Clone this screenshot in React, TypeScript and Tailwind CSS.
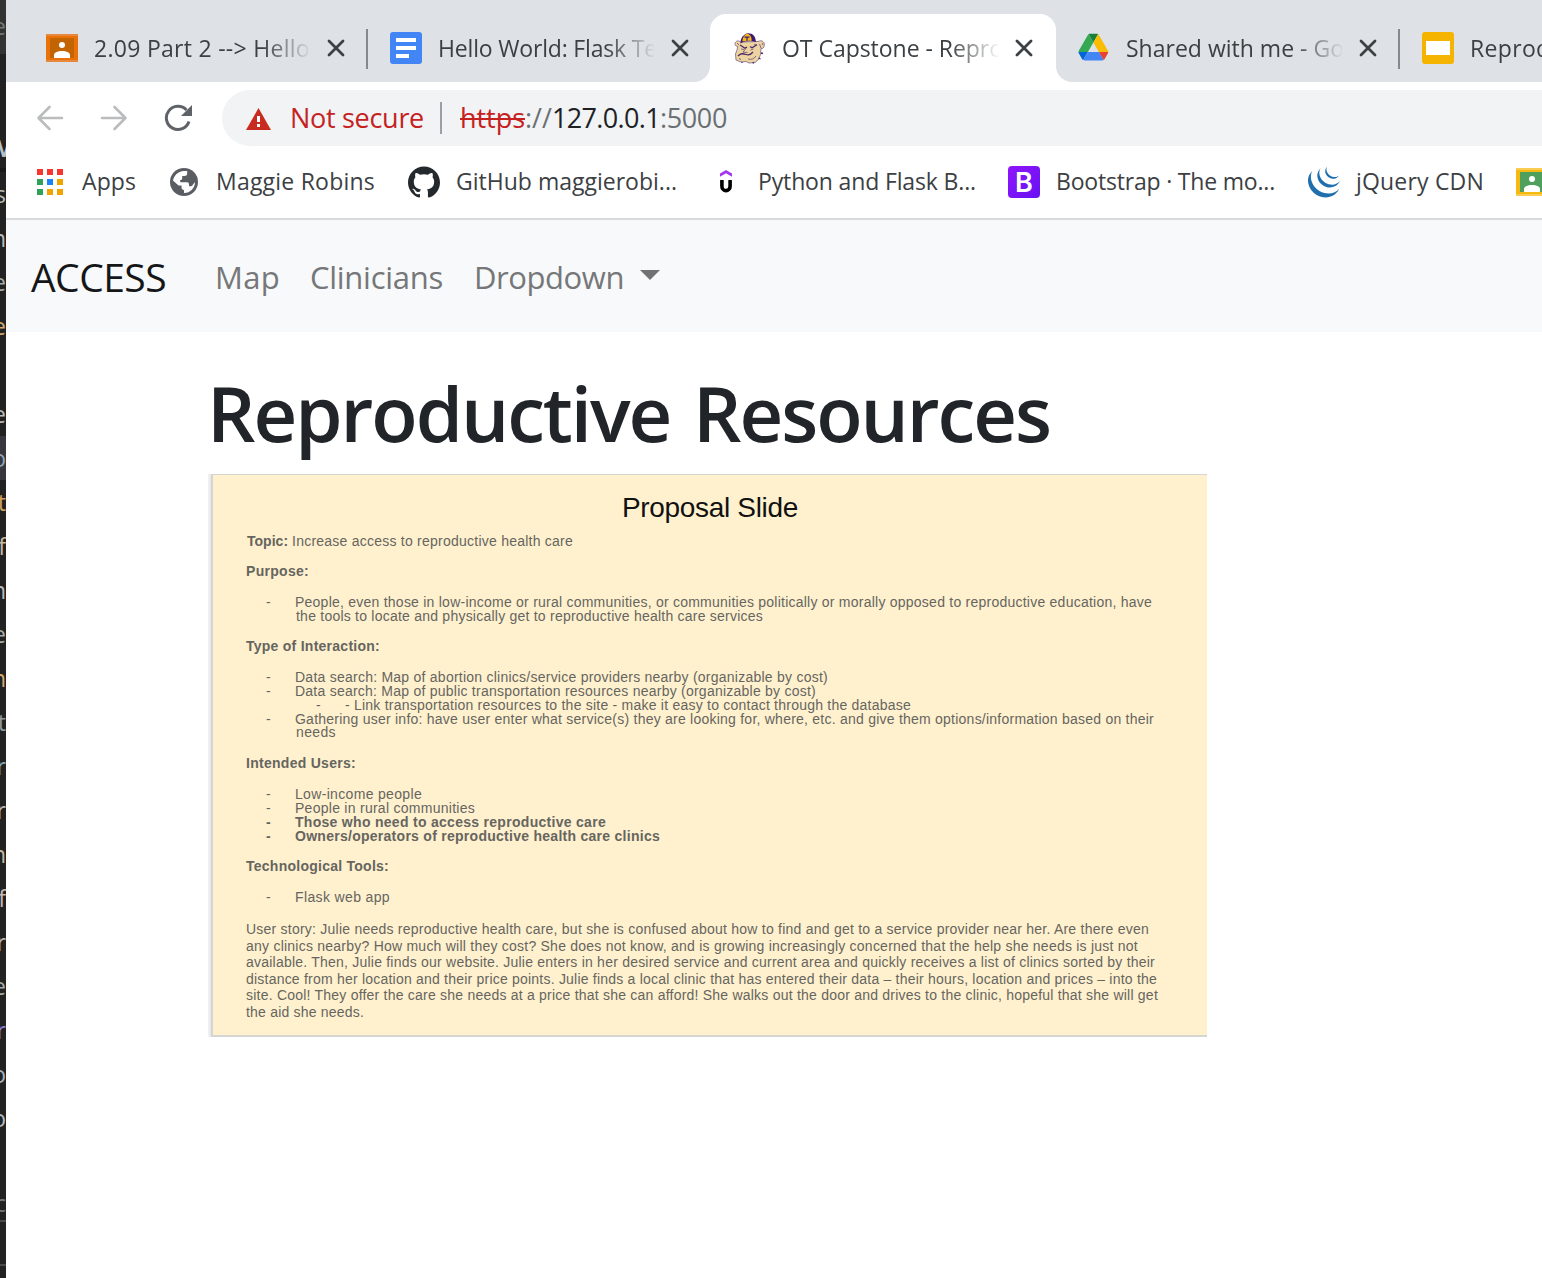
import { useLayoutEffect, useRef, useState } from "react";
import type { ReactNode } from "react";
import { SiGithub, SiJquery } from "react-icons/si";

/* A run of text whose tracking is adjusted so that it takes up exactly `w` pixels. */
function Fit({ w, children, className = "" }: { w: number; children: string; className?: string }) {
  const ref = useRef<HTMLSpanElement>(null);
  const [spacing, setSpacing] = useState(0);
  useLayoutEffect(() => {
    if (!ref.current) return;
    const natural = ref.current.getBoundingClientRect().width;
    setSpacing((w - natural) / children.length);
  }, [w, children]);
  return (
    <span ref={ref} className={`inline-block shrink-0 whitespace-pre ${className}`} style={{ letterSpacing: spacing }}>
      {children}
    </span>
  );
}

function Classroom({ frame, edge, board }: { frame: string; edge: string; board: string }) {
  return (
    <svg width="32" height="28" viewBox="0 0 32 28" className="shrink-0" shapeRendering="crispEdges">
      <rect width="32" height="28" fill={edge} />
      <rect y="2" width="32" height="24" fill={frame} />
      <rect x="4" y="4" width="24" height="20" fill={board} />
      <g fill="#fff" shapeRendering="auto">
        <circle cx="16" cy="11" r="3" />
        <path d="M8 24v-3c0-2.400 3.600-4 8-4s8 1.600 8 4v3z" />
      </g>
    </svg>
  );
}

function Docs() {
  return (
    <svg width="32" height="32" viewBox="0 0 32 32" className="shrink-0">
      <rect width="32" height="32" rx="3" fill="#4285f4" />
      <path d="M6 6h20v4H6zM6 14h20v4H6zM6 22h13v4H6z" fill="#fff" />
    </svg>
  );
}

function Slides() {
  return (
    <svg width="32" height="32" viewBox="0 0 32 32" className="shrink-0">
      <rect width="32" height="32" rx="3" fill="#f5b400" />
      <path d="M4 9h24v14H4z" fill="#fff" />
    </svg>
  );
}

function Drive() {
  return (
    <svg width="32" height="32" viewBox="-1.5 -5.5 94 94" className="shrink-0">
      <path d="m6.6 66.85 3.85 6.65c.8 1.4 1.95 2.5 3.3 3.3l13.75-23.8h-27.5c0 1.55.4 3.1 1.2 4.5z" fill="#0066da" />
      <path d="m43.65 25-13.75-23.8c-1.35.8-2.5 1.9-3.3 3.3l-25.4 44a9.06 9.06 0 0 0 -1.2 4.5h27.5z" fill="#34a853" />
      <path d="m73.55 76.8c1.35-.8 2.5-1.9 3.3-3.3l1.6-2.75 7.65-13.25c.8-1.4 1.2-2.95 1.2-4.5h-27.502l5.852 11.5z" fill="#ea4335" />
      <path d="m43.65 25 13.75-23.8c-1.35-.8-2.9-1.2-4.5-1.2h-18.5c-1.6 0-3.15.45-4.5 1.2z" fill="#188038" />
      <path d="m59.8 53h-32.3l-13.75 23.8c1.35.8 2.9 1.2 4.5 1.2h50.8c1.6 0 3.15-.45 4.5-1.2z" fill="#4285f4" />
      <path d="m73.4 26.5-12.7-22c-.8-1.4-1.95-2.5-3.3-3.3l-13.75 23.8 16.15 28h27.45c0-1.55-.4-3.1-1.2-4.5z" fill="#fbbc04" />
    </svg>
  );
}

function Globe() {
  return (
    <svg width="28" height="28" viewBox="0 0 28 28" className="shrink-0">
      <circle cx="14" cy="14" r="14" fill="#5a5e63" />
      <path d="M3 14C3 8 8 3 14 3h3.200v2.500q0 2.500-3 2.500h-2v2.500q0 1.500-2 1.500v2.200h7q1.800 0 1.800 2v2h1.500q2 0 2.300-1.500L25 14C25 20 20.500 25 14 25v-3q-2.500 0-2.500-3v-1.500H8.500L3 12.500z" fill="#fff" />
    </svg>
  );
}

function Bulldog() {
  return (
    <svg width="32" height="32" viewBox="0 0 32 32" className="shrink-0">
      <path d="M7 10C4 8 1.500 9 1 11.500c0 2 1.200 3 2.800 3L3 18l-1.500 4 .5 6 5 2 5-.5 3 1.500 6-.5 3.500-3 2-5 .5-6c2 .4 3.200-1 3.200-3.500C30.800 10 28 7.500 24 9.500z" fill="#ecd3a0" stroke="#7b5f86" strokeWidth=".8" />
      <path d="M6.500 11.500C6.500 6 9 2.500 13.500 1.200 19 1 21.500 4 22 10c-5-1.500-10.500-1.300-15.500 1.500z" fill="#3d1a73" />
      <path d="M8.500 9.500c0-4 2-7 5-8C17 3 18 6 17.500 9c-3-.5-6-.3-9 .5z" fill="#f4b81c" />
      <path d="M10.500 5.200h5M13 5.200v3.600" stroke="#3d1a73" strokeWidth="1.200" />
      <path d="M6 13l5 3.200 2-1M16 14.500l2 1.200 5-3M4 24c3-3 5-2.500 8-1.500s5 0 7-2.500" fill="none" stroke="#4a2a66" strokeWidth="1.300" />
      <path d="M7 17l3 .5M16.500 18l3-1M11.500 17l-2.500 3.200 4.500.3M5 26.500l2 1M14 27c3 1 6 0 8-3M25.500 12l1.500 4M3 11l2 2M28 11l1 2M20 12.500l3 .5" fill="none" stroke="#6b4a80" strokeWidth=".8" />
      <path d="M24.500 26l2 1M19 30l.5 1.500M27 21l2 .5M8 30v1" stroke="#4a2a66" strokeWidth="1.300" />
    </svg>
  );
}

function Close() {
  return (
    <svg width="18" height="18" viewBox="0 0 18 18" className="shrink-0">
      <path d="M2 2l14 14M16 2L2 16" stroke="#3c4043" strokeWidth="2.800" strokeLinecap="round" />
    </svg>
  );
}

function Tab({ icon, title, w, active = false, divider = false }: { icon: ReactNode; title: string; w: number; active?: boolean; divider?: boolean }) {
  return (
    <div className="relative flex h-[68px] w-[344px] shrink-0 items-center pl-6">
      {active && (
        <>
          <div className="absolute inset-y-0 -right-[2px] left-0 rounded-t-[16px] bg-white" />
          <div className="absolute bottom-0 -left-4 size-4 bg-white" />
          <div className="absolute bottom-0 -left-4 size-4 rounded-br-[16px] bg-[#dee1e6]" />
          <div className="absolute bottom-0 -right-[18px] size-4 bg-white" />
          <div className="absolute bottom-0 -right-[18px] size-4 rounded-bl-[16px] bg-[#dee1e6]" />
        </>
      )}
      <div className="relative flex items-center">
        {icon}
        <div className="ml-4 w-[216px] overflow-hidden text-[23px] leading-[36px] text-[#3c4043] [mask-image:linear-gradient(to_right,black_168px,transparent_218px)]">
          <Fit w={w}>{title}</Fit>
        </div>
        <div className="ml-[17px]">
          <Close />
        </div>
      </div>
      {divider && <div className="absolute right-[-2px] top-[15px] h-10 w-0.5 bg-[#85888c]" />}
    </div>
  );
}

function AppsGrid() {
  const colors = ["#f8352f", "#f8352f", "#f8352f", "#31a05a", "#1a83fa", "#f1a400", "#31a05a", "#f1a400", "#f1a400"];
  return (
    <div className="grid shrink-0 grid-cols-3 gap-1">
      {colors.map((c, i) => (
        <div key={i} className="size-[6px]" style={{ backgroundColor: c }} />
      ))}
    </div>
  );
}

function Udemy() {
  return (
    <svg width="12" height="24" viewBox="0 0 12 24" className="shrink-0">
      <path d="M0 3.500L6 0l6 3.500v3.200L6 3.300 0 6.700z" fill="#a435f0" />
      <path d="M1.900 10v6.200a4.100 4.400 0 0 0 8.200 0V10" fill="none" stroke="#000" strokeWidth="3.600" />
    </svg>
  );
}

function Bookmark({ icon, title, w, gap, next }: { icon: ReactNode; title: string; w: number; gap: string; next: string }) {
  return (
    <div className={`flex shrink-0 items-center ${gap} ${next}`}>
      {icon}
      <Fit w={w} className="-mt-0.5">{title}</Fit>
    </div>
  );
}

function Item({ w, bold = false, children }: { w: number; bold?: boolean; children: string }) {
  return (
    <li className={`flex h-[14px] pl-[20px] ${bold ? "font-bold" : ""}`}>
      <span className="w-[29px] shrink-0">-</span>
      <Fit w={w}>{children}</Fit>
    </li>
  );
}

function Section({ title, w, mt, children }: { title: string; w: number; mt: string; children: ReactNode }) {
  return (
    <section className={mt}>
      <h3 className="flex h-[14px] font-bold">
        <Fit w={w}>{title}</Fit>
      </h3>
      <ul className="mt-[17px]">{children}</ul>
    </section>
  );
}

const story: [string, number][] = [
  ["User story: Julie needs reproductive health care, but she is confused about how to find and get to a service provider near her. Are there even", 903],
  ["any clinics nearby? How much will they cost? She does not know, and is growing increasingly concerned that the help she needs is just not", 892],
  ["available. Then, Julie finds our website. Julie enters in her desired service and current area and quickly receives a list of clinics sorted by their", 909],
  ["distance from her location and their price points. Julie finds a local clinic that has entered their data – their hours, location and prices – into the", 911],
  ["site. Cool! They offer the care she needs at a price that she can afford! She walks out the door and drives to the clinic, hopeful that she will get", 912],
  ["the aid she needs.", 118],
];

const code: [string, string][] = [
  ["s", "text-[#b9b9b9]"], ["n", "text-[#b9b9b9]"], ["e", "text-[#a8aaa8]"], ["e", "text-[#d0a870]"], ["", ""],
  ["e", "text-[#b9b9b9]"], ["o", "bg-[#37373d] text-[#8fa3b5]"], ["t", "text-[#d0a060]"], ["f", "text-[#c5b9a0]"],
  ["n", "text-[#b9b9b9]"], ["e", "text-[#a8aaa8]"], ["n", "text-[#d0a870]"], ["t", "text-[#8f9aa0]"], ["r", "text-[#7fa8b9]"],
  ["r", "text-[#b9b9b9]"], ["n", "text-[#c0b8a0]"], ["f", "text-[#c5b9b0]"], ["r", "text-[#b9b9b9]"], ["e", "text-[#a8aaa8]"],
  ["r", "text-[#8880d8]"], ["o", "text-[#a8b0b9]"], ["o", "text-[#b0b9c0]"],
];

function EditorEdge() {
  return (
    <div className="flex h-full w-[6px] shrink-0 flex-col overflow-hidden bg-[#222222] text-[23px]">
      <div className="flex h-[54px] shrink-0 justify-end bg-[#333333] leading-[52px] text-[#777]">e</div>
      <div className="h-[72px] shrink-0" />
      <div className="flex h-[46px] shrink-0 justify-end border-b-4 border-[#191919] font-bold leading-[44px] text-[#b9c0c4]">
        <span className="-mr-[9px]">M</span>
      </div>
      {code.map(([c, color], i) => (
        <div key={i} className={`flex h-11 shrink-0 justify-end leading-[44px] ${color}`}>
          {c}
        </div>
      ))}
      <div className="mt-[46px] flex h-[80px] shrink-0 flex-col">
        <div className="flex h-[36px] shrink-0 items-center justify-end border-b-2 border-[#4a4a4a] leading-[36px] text-[#777]">c</div>
        <div className="h-[44px] shrink-0 border-b-2 border-[#4a4a4a]" />
      </div>
    </div>
  );
}

export default function App() {
  return (
    <div className="flex h-[1278px] w-[1542px] overflow-hidden bg-white font-['Open_Sans',sans-serif]">
      <EditorEdge />
      <div className="flex min-w-0 flex-1 flex-col overflow-hidden">
        <div className="flex h-[82px] shrink-0 overflow-hidden bg-[#dee1e6] pl-4 pt-[14px]">
          <Tab icon={<Classroom frame="#e8710a" edge="#e8883c" board="#c26401" />} title="2.09 Part 2 --> Hello" w={216} divider />
          <Tab icon={<Docs />} title="Hello World: Flask Te" w={219} />
          <Tab icon={<Bulldog />} title="OT Capstone - Repro" w={221} active />
          <Tab icon={<Drive />} title="Shared with me - Go" w={218} divider />
          <Tab icon={<Slides />} title="Reproductive" w={146} />
        </div>

        <div className="flex h-16 shrink-0 items-end pl-[30px]">
          <div className="flex h-14 w-[186px] shrink-0 items-center">
            <svg width="28" height="28" viewBox="0 0 28 28" className="shrink-0" fill="none" stroke="#babcbe" strokeWidth="2.600" strokeLinecap="round" strokeLinejoin="round">
              <path d="M26 14H2.500M13.500 3L2.500 14l11 11" />
            </svg>
            <svg width="28" height="28" viewBox="0 0 28 28" className="ml-9 shrink-0" fill="none" stroke="#babcbe" strokeWidth="2.600" strokeLinecap="round" strokeLinejoin="round">
              <path d="M2 14h23.500M14.500 3l11 11-11 11" />
            </svg>
            <svg width="28" height="28" viewBox="0 0 28 28" className="ml-9 shrink-0">
              <path d="M25 17.500A11.600 11.600 0 1 1 22.500 6" fill="none" stroke="#5f6368" strokeWidth="3" />
              <path d="M28 1v11H17z" fill="#5f6368" />
            </svg>
          </div>
          <div className="flex h-14 flex-1 items-center rounded-l-full bg-[#f1f3f4] pl-6 text-[27px]">
            <svg width="25" height="22" viewBox="0 0 25 22" className="mt-0.5 shrink-0">
              <path d="M12.500 0L25 22H0z" fill="#c82b20" />
              <path d="M11 8h3v6h-3zM11 16h3v3h-3z" fill="#fff" />
            </svg>
            <Fit w={134} className="ml-[19px] text-[#c5221f]">Not secure</Fit>
            <div className="ml-4 h-8 w-0.5 shrink-0 bg-[#9aa0a6]" />
            <div className="relative ml-[18px]">
              <Fit w={65} className="text-[#c5221f]">https</Fit>
              <div className="absolute inset-x-0 top-[20px] h-0.5 bg-[#c5221f]" />
            </div>
            <Fit w={27} className="text-[#6b6f73]">://</Fit>
            <Fit w={108} className="text-[#202124]">127.0.0.1</Fit>
            <Fit w={67} className="text-[#6b6f73]">:5000</Fit>
          </div>
        </div>

        <div className="flex h-[74px] shrink-0 items-center border-b-2 border-[#d9dadb] pl-[31px] text-[23px] text-[#3c4043]">
          <Bookmark icon={<AppsGrid />} title="Apps" w={54} gap="gap-[19px]" next="mr-[34px]" />
          <Bookmark icon={<Globe />} title="Maggie Robins" w={159} gap="gap-[18px]" next="mr-[33px]" />
          <Bookmark icon={<SiGithub size={32} color="#24292e" />} title="GitHub maggierobi..." w={221} gap="gap-[16px]" next="mr-[43px]" />
          <Bookmark icon={<Udemy />} title="Python and Flask B..." w={218} gap="gap-[26px]" next="mr-[32px]" />
          <Bookmark
            icon={
              <div className="flex size-8 shrink-0 items-center justify-center rounded-[4px] bg-linear-to-br from-[#9013fe] to-[#6610f2] font-['Inter',sans-serif] text-[27px] font-semibold leading-none text-white">
                B
              </div>
            }
            title="Bootstrap · The mo..."
            w={219}
            gap="gap-[16px]"
            next="mr-[33px]"
          />
          <Bookmark icon={<SiJquery size={32} color="#1f6fae" />} title="jQuery CDN" w={128} gap="gap-[16px]" next="mr-[32px]" />
          <Classroom frame="#f5b912" edge="#f9cd52" board="#4ea05c" />
        </div>

        <nav className="flex h-[112px] shrink-0 items-center bg-[#f8f9fb] pl-[25px] pt-0.5 text-[31px] text-[#757778]">
          <Fit w={135} className="text-[39px] text-[#151617]">ACCESS</Fit>
          <Fit w={65} className="ml-[49px]">Map</Fit>
          <Fit w={133} className="ml-[30px]">Clinicians</Fit>
          <Fit w={150} className="ml-[31px]">Dropdown</Fit>
          <svg width="20" height="10" viewBox="0 0 20 10" className="mb-1 ml-[16px]">
            <path d="M0 0h20L10 10z" fill="#707274" />
          </svg>
        </nav>

        <main className="pl-[202px]">
          <h1 className="mt-[28px] flex h-[106px] items-center text-[76px] font-semibold leading-[106px] text-[#212529] [word-spacing:5px]">
            <Fit w={843} className="-ml-px">Reproductive Resources</Fit>
          </h1>
          <div className="mt-[8px] flex h-[563px] w-[999px]">
            <div className="w-[3px] bg-linear-to-r from-[#f3f4f5] to-[#e4e6e8]" />
            <article className="flex-1 border-b-2 border-l-2 border-t border-[#d5d5d2] bg-[#fff1ce] pl-[33px] pt-[15px] font-['Liberation_Sans',Arial,sans-serif] text-[14px] leading-[14px] text-[#66655f]">
              <h2 className="ml-[374px] flex h-[36px] pl-0.5 text-[28px] leading-[36px] text-[#111]">
                <Fit w={176}>Proposal Slide</Fit>
              </h2>
              <p className="mt-[8px] flex h-[14px]">
                <Fit w={46} className="pl-px font-bold">{"Topic: "}</Fit>
                <Fit w={281}>Increase access to reproductive health care</Fit>
              </p>
              <Section title="Purpose:" w={63} mt="mt-[16px]">
                <Item w={857}>People, even those in low-income or rural communities, or communities politically or morally opposed to reproductive education, have</Item>
                <li className="flex h-[14px] pl-[50px]">
                  <Fit w={467}>the tools to locate and physically get to reproductive health care services</Fit>
                </li>
              </Section>
              <Section title="Type of Interaction:" w={134} mt="mt-[16px]">
                <Item w={533}>Data search: Map of abortion clinics/service providers nearby (organizable by cost)</Item>
                <Item w={521}>Data search: Map of public transportation resources nearby (organizable by cost)</Item>
                <li className="flex h-[14px] pl-[70px]">
                  <span className="w-[29px] shrink-0">-</span>
                  <Fit w={566}>- Link transportation resources to the site - make it easy to contact through the database</Fit>
                </li>
                <Item w={859}>Gathering user info: have user enter what service(s) they are looking for, where, etc. and give them options/information based on their</Item>
                <li className="-mt-px flex h-[14px] pl-[50px]">
                  <Fit w={40}>needs</Fit>
                </li>
              </Section>
              <Section title="Intended Users:" w={110} mt="mt-[17px]">
                <Item w={127}>Low-income people</Item>
                <Item w={180}>People in rural communities</Item>
                <Item w={311} bold>Those who need to access reproductive care</Item>
                <Item w={365} bold>Owners/operators of reproductive health care clinics</Item>
              </Section>
              <Section title="Technological Tools:" w={143} mt="mt-[16px]">
                <Item w={95}>Flask web app</Item>
              </Section>
              <div className="mt-[17px] leading-[16.500px]">
                {story.map(([line, w]) => (
                  <p key={line} className="flex">
                    <Fit w={w}>{line}</Fit>
                  </p>
                ))}
              </div>
            </article>
          </div>
        </main>
      </div>
    </div>
  );
}
